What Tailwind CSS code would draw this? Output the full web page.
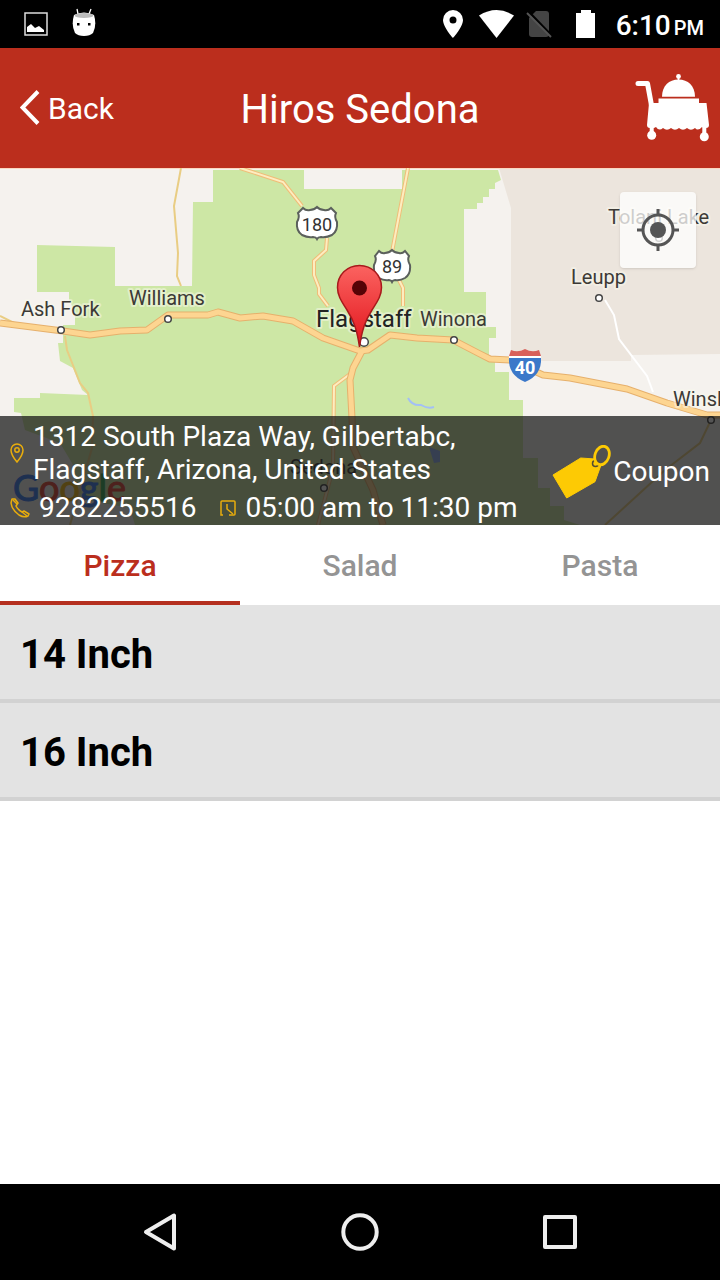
<!DOCTYPE html>
<html lang="en">
<head>
    <meta charset="UTF-8">
    <meta name="viewport" content="width=device-width, initial-scale=1.0">
    <title>Hiros Sedona</title>
    <script src="https://cdn.jsdelivr.net/npm/@tailwindcss/browser@4"></script>
</head>
<body class="bg-white font-['Roboto',sans-serif]">
    <div class="min-h-screen flex flex-col">
        <!-- Status bar -->
        <div class="h-12 bg-black text-white flex items-center justify-between pl-6 pr-4">
            <div class="flex items-center gap-6">
                <svg class="w-6 h-6" viewBox="0 0 24 24" fill="none">
                    <rect x="1" y="1" width="22" height="22" stroke="#ddd" stroke-width="1.5"/>
                    <path d="M3 20V15L7 12L11 16L15 14L20 18V20Z" fill="#fff"/>
                </svg>
                <svg class="w-6 h-7 mb-1" viewBox="0 0 24 28">
                    <path d="M6 6L5 1M17 6L19 1" stroke="#fff" stroke-width="1.3"/>
                    <path d="M2 7Q12 2 22 7Q25 17 21 25Q18 28 12 28Q6 28 3 25Q-1 17 2 7Z" fill="#fff"/>
                    <ellipse cx="12" cy="7.500" rx="9.500" ry="2.500" fill="#bbb"/>
                    <rect x="5" y="15" width="2.500" height="2.500"/>
                    <rect x="16" y="15" width="2.500" height="2.500"/>
                </svg>
            </div>
            <div class="flex items-center">
                <svg class="w-5 h-7 mr-4" viewBox="0 0 20 28">
                    <path fill="#fff" fill-rule="evenodd" d="M10 0A10 10 0 0 0 0 10C0 17 10 28 10 28S20 17 20 10A10 10 0 0 0 10 0ZM10 13.500A3.500 3.500 0 1 1 10 6.500A3.500 3.500 0 0 1 10 13.500Z"/>
                </svg>
                <svg class="w-[35px] h-7 mr-3" viewBox="0 0 35 28">
                    <path fill="#fff" d="M0 5.500Q17.500-5.500 35 5.500L17.500 28Z"/>
                </svg>
                <svg class="w-[26px] h-7 mr-6" viewBox="0 0 26 28">
                    <path d="M3 8L10 1H20Q23 1 23 4V24Q23 27 20 27H6Q3 27 3 24Z" fill="#444"/>
                    <path d="M2 1L26 26" stroke="#000" stroke-width="2.500"/>
                    <path d="M1 3L25 27" stroke="#555" stroke-width="2"/>
                </svg>
                <svg class="w-5 h-7 mr-5" viewBox="0 0 20 28">
                    <path fill="#fff" d="M5 0H15V3H19V28H0V3H5Z"/>
                </svg>
                <span class="text-[28px] font-medium leading-8 pt-1">6:10 <span class="text-xl -ml-1">PM</span></span>
            </div>
        </div>

        <!-- Header -->
        <header class="h-[120px] bg-[#bb2e1d] text-white grid grid-cols-[1fr_auto_1fr] items-center px-2.5">
            <button type="button" class="flex items-center gap-2 pl-2.5 text-[30px] justify-self-start">
                <svg class="w-5 h-9" viewBox="0 0 20 36" fill="none" stroke="#fff" stroke-width="4">
                    <path d="M18 1.500L2.500 17.500L18 33.500"/>
                </svg>
                Back
            </button>
            <h1 class="text-[40px] leading-12 pt-1">Hiros Sedona</h1>
            <button type="button" class="justify-self-end" aria-label="Cart">
                <svg class="w-[75px] h-[68px]" viewBox="0 0 75 68" fill="#fff">
                    <path d="M3 9.500H12.500L17 34" fill="none" stroke="#fff" stroke-width="5" stroke-linecap="round" stroke-linejoin="round"/>
                    <circle cx="43.500" cy="2.500" r="2.400"/>
                    <path d="M42.700 3H44.300V7H42.700Z"/>
                    <path d="M27 22.700C27 12 34 5.500 43.500 5.500S60 12 60 22.700Z"/>
                    <path d="M23.500 24.500H64V29H71.500L74 51Q74 54 71 54Q69.500 55 67 53Q63 57.500 60 54Q56 57.500 52 54Q48 57.500 44 54Q40 57.500 36 54Q32 57.500 28 54Q24 57.500 21 53Q18 55 15 54Q12 54 12 51L14 29H23.500Z"/>
                    <path d="M14.700 52H18.700V58H14.700ZM67.300 52H71.300V60H67.300Z"/>
                    <circle cx="16.700" cy="61.200" r="4.500"/>
                    <circle cx="69.300" cy="62.800" r="4.500"/>
                </svg>
            </button>
        </header>

        <!-- Map -->
        <section class="relative h-[357px] overflow-hidden bg-[#f5f2ee]">
            <svg class="w-full h-full" viewBox="0 0 720 357" preserveAspectRatio="xMidYMid slice">
                <defs>
                    <linearGradient id="pinFill" x1="0" y1="0" x2="0" y2="1">
                        <stop offset="0" stop-color="#fb6360"/>
                        <stop offset="1" stop-color="#e2141c"/>
                    </linearGradient>
                </defs>
                <rect width="720" height="357" fill="#f5f2ee"/>
                <path fill="#ece5dd" d="M499 0L511 40V193H631V187L720 186V0Z"/>
                <path fill="#cde7a5" d="M213 2V34H193L192 118H115V79L37 77V124H69V131L75 145V157H63V175H58L60 193L73 200L82 222L88 227L40 225V230H14V244L21 245L25 262L60 275L75 300V330L130 340L135 357H580L564 352V338H550V320H538V290H523V232H509V204H495V190H489V170H496V159H486V124H464V41H477V35H483V29H489V21H495V15L501 12L498 2H402V21H304V2Z"/>
                <path d="M0 0.500H720" stroke="#fbd7c1"/>
                <path d="M408 230Q412 238 421 237Q428 241 434 239" fill="none" stroke="#a3bff5" stroke-width="2"/>
                <path d="M429 279L440 283V294L434 295Z" fill="#8fb0f5"/>

                <!-- minor roads -->
                <g fill="none" stroke="#e9cd83" stroke-width="2">
                    <path d="M181 0L174 38L178 85L177 108L181 118"/>
                    <path d="M65 168L67 182L80 215L88 225L93 248L92 280L70 357"/>
                    <path d="M711 252L700 275L665 302L640 325L605 357"/>
                    <path d="M0 148L16 156"/>
                    <path d="M605 132L614 147L619 171L647 208L653 224" stroke="#fff"/>
                </g>
                <g fill="none" stroke="#f0bd78" stroke-width="4">
                    <path d="M240 0L283 14L302 38"/>
                    <path d="M327 70L326 82L314 93V107L319 120V126L328 138"/>
                    <path d="M408 0L392 84M398 110L403 120V138"/>
                    <path d="M350 206L334 218L333 300L318 357"/>
                </g>
                <g fill="none" stroke="#fdedc0" stroke-width="2">
                    <path d="M240 0L283 14L302 38"/>
                    <path d="M327 70L326 82L314 93V107L319 120V126L328 138"/>
                    <path d="M408 0L392 84M398 110L403 120V138"/>
                    <path d="M350 206L334 218L333 300L318 357"/>
                </g>

                <!-- interstates -->
                <g fill="none" stroke="#e6b06c" stroke-width="7" stroke-linejoin="round">
                    <path d="M0 155L63 163L90 167L120 163L147 162L168 147L208 147L218 144L240 150L263 148L293 153L323 170L360 183L368 182L390 167L417 170L453 172L480 186L490 191L510 192L543 207L570 210L627 221L667 235L707 247H720"/>
                    <path d="M362 183L353 200L350 212L352 250L353 279L373 322L383 357"/>
                </g>
                <g fill="none" stroke="#fdd591" stroke-width="5" stroke-linejoin="round">
                    <path d="M0 155L63 163L90 167L120 163L147 162L168 147L208 147L218 144L240 150L263 148L293 153L323 170L360 183L368 182L390 167L417 170L453 172L480 186L490 191L510 192L543 207L570 210L627 221L667 235L707 247H720"/>
                    <path d="M362 183L353 200L350 212L352 250L353 279L373 322L383 357"/>
                </g>

                <!-- towns -->
                <g fill="#fff" stroke="#444" stroke-width="1.500">
                    <circle cx="61" cy="162" r="3.300"/>
                    <circle cx="168" cy="151" r="3.300"/>
                    <circle cx="364" cy="174" r="4.300"/>
                    <circle cx="454" cy="172" r="3.300"/>
                    <circle cx="599" cy="130" r="3.300"/>
                    <circle cx="659" cy="70" r="3.300"/>
                    <circle cx="711" cy="252" r="3.300"/>
                    <circle cx="324" cy="320" r="3.300"/>
                </g>
                <g class="text-xl" fill="#3c3a36" stroke="#f8f8ec" stroke-opacity="0.500" stroke-width="4" stroke-linejoin="round" paint-order="stroke">
                    <text x="21" y="148">Ash Fork</text>
                    <text x="129" y="137">Williams</text>
                    <text x="420" y="158">Winona</text>
                    <text x="571" y="116">Leupp</text>
                    <text x="608" y="56">Tolani Lake</text>
                    <text x="673" y="238">Winslow</text>
                    <text x="290" y="306" stroke="none">Sedona</text>
                    <text x="316" y="159" class="text-2xl" fill="#222">Flagstaff</text>
                </g>

                <!-- route shields -->
                <g fill="#fff" stroke="#5b605c" stroke-width="2">
                    <path transform="translate(296 39)" d="M2 6L7 1Q10 4 14 3Q18 3 21 0Q24 3 28 3Q32 4 35 1L40 6Q38 10 41 15Q42 24 36 28Q30 31 25 30Q22 30 21 32Q20 30 17 30Q12 31 6 28Q0 24 1 15Q4 10 2 6Z"/>
                    <path transform="translate(373 82)" d="M2 6L6 1Q9 4 12 3Q16 3 19 0Q22 3 26 3Q29 4 32 1L36 6Q34 10 37 15Q38 24 32 28Q27 31 22 30Q20 30 19 32Q18 30 16 30Q11 31 6 28Q0 24 1 15Q4 10 2 6Z"/>
                </g>
                <g class="text-lg" fill="#333" text-anchor="middle">
                    <text x="317" y="63">180</text>
                    <text x="392" y="105">89</text>
                </g>
                <path fill="#d9605a" d="M511 182Q518 185 525 181Q532 185 539 182L541 188H509Z"/>
                <path fill="#3b78c9" d="M509 190H541Q542 207 525 214Q508 207 509 190Z"/>
                <path stroke="#fff" stroke-width="2" d="M509 189H541"/>
                <text x="525" y="206" class="text-lg font-bold" fill="#fff" text-anchor="middle">40</text>

                <text x="13" y="333" class="text-[36px] font-['Lato',sans-serif]" stroke-width="1"><tspan fill="#3a7cf0" stroke="#3a7cf0">G</tspan><tspan fill="#e64436" stroke="#e64436">o</tspan><tspan fill="#f5b912" stroke="#f5b912">o</tspan><tspan fill="#3a7cf0" stroke="#3a7cf0">g</tspan><tspan fill="#34a853" stroke="#34a853">l</tspan><tspan fill="#e64436" stroke="#e64436">e</tspan></text>

                <path fill="url(#pinFill)" stroke="#a81a1c" stroke-width="1.500" d="M359.500 97.500C347 97.500 337.500 107 337.500 119.500C337.500 128 342 134 347 142C354 153 357 162 359.500 179C362 162 365 153 372 142C377 134 381.500 128 381.500 119.500C381.500 107 372 97.500 359.500 97.500Z"/>
                <circle cx="359.500" cy="120" r="7.500" fill="#560306"/>
            </svg>

            <button type="button" aria-label="My location" class="absolute top-6 right-6 size-[76px] flex items-center justify-center rounded-sm bg-white/75 shadow">
                <svg class="size-[42px]" viewBox="0 0 42 42" fill="none" stroke="#555" stroke-width="3">
                    <circle cx="21" cy="21" r="15"/>
                    <circle cx="21" cy="21" r="8" fill="#555" stroke="none"/>
                    <path d="M21 0V7M21 35V42M0 21H7M35 21H42"/>
                </svg>
            </button>

            <!-- Restaurant info -->
            <div class="absolute inset-x-0 bottom-0 bg-[#141414]/73 text-white text-[28px] leading-[33px] flex items-center justify-between px-2.5">
                <div class="pt-1">
                    <address class="not-italic flex items-center gap-[9px]">
                        <svg class="w-3.5 h-5" viewBox="0 0 14 20" fill="none" stroke="#e9ad0c" stroke-width="1.500">
                            <path d="M7 1A6 6 0 0 0 1 7C1 12 7 19 7 19S13 12 13 7A6 6 0 0 0 7 1Z"/>
                            <circle cx="7" cy="7" r="2.200"/>
                        </svg>
                        <span>1312 South Plaza Way, Gilbertabc,<br>Flagstaff, Arizona, United States</span>
                    </address>
                    <div class="flex items-center gap-6 pt-[5px] pb-px">
                        <a href="tel:9282255516" class="flex items-center gap-[9px]">
                            <svg class="size-5" viewBox="0 0 20 20" fill="none" stroke="#e9ad0c" stroke-width="1.500" stroke-linejoin="round">
                                <path d="M2 1L5 1L8 5L6 8Q8 12 12 14L14 13L19 16L18 18Q14 20 9 17Q2 12 1 5Z"/>
                                <path d="M3 2L7 6M12 14L17 18"/>
                            </svg>
                            9282255516
                        </a>
                        <div class="flex items-center gap-[9px]">
                            <svg class="size-4" viewBox="0 0 16 16" fill="none" stroke="#e9ad0c" stroke-width="1.500">
                                <path d="M3 15H1V2Q1 1 2 1H14Q15 1 15 2V14Q15 15 14 15H9"/>
                                <path d="M7 4V9L13 14"/>
                            </svg>
                            05:00 am to 11:30 pm
                        </div>
                    </div>
                </div>
                <button type="button" class="flex items-center gap-0.5 pt-0.5">
                    <svg class="w-[59px] h-[54px]" viewBox="0 0 59 54">
                        <path fill="#fdca04" stroke="#fdca04" stroke-linejoin="round" d="M1 30L28.700 13L43 14L49 20L43 36.700L14.700 53Z"/>
                        <circle cx="43.500" cy="18.500" r="3" fill="none" stroke="#514d35" stroke-width="1.500"/>
                        <ellipse cx="50" cy="10.500" rx="7" ry="9.500" transform="rotate(20 50 10.500)" fill="none" stroke="#fdca04" stroke-width="2.800"/>
                    </svg>
                    Coupon
                </button>
            </div>
        </section>

        <!-- Menu -->
        <main class="flex-1">
            <div role="tablist" class="grid grid-cols-3 h-20 text-[30px] font-medium text-[#949494]">
                <button type="button" role="tab" aria-selected="true" class="pt-1 border-b-4 border-[#b5301f] text-[#bb2e1d]">Pizza</button>
                <button type="button" role="tab" class="pt-1 border-b-4 border-transparent">Salad</button>
                <button type="button" role="tab" class="pt-1 border-b-4 border-transparent">Pasta</button>
            </div>
            <ul class="text-[40px] font-bold text-black">
                <li><button type="button" class="w-full h-[98px] px-5 pt-1.5 text-left bg-[#e3e3e3] border-b-4 border-[#d2d2d2]">14 Inch</button></li>
                <li><button type="button" class="w-full h-[98px] px-5 pt-1.5 text-left bg-[#e3e3e3] border-b-4 border-[#d2d2d2]">16 Inch</button></li>
            </ul>
        </main>

        <!-- Navigation bar -->
        <nav class="h-24 bg-black px-[60px] grid grid-cols-3 items-center justify-items-center">
            <button type="button" aria-label="Back">
                <svg class="size-10" viewBox="0 0 40 40" fill="none" stroke="#eee" stroke-width="4" stroke-linejoin="round">
                    <path d="M34 3.500V36.500L6 20Z"/>
                </svg>
            </button>
            <button type="button" aria-label="Home">
                <svg class="size-10" viewBox="0 0 40 40" fill="none" stroke="#eee" stroke-width="4">
                    <circle cx="20" cy="20" r="16.700"/>
                </svg>
            </button>
            <button type="button" aria-label="Recent apps">
                <svg class="size-10" viewBox="0 0 40 40" fill="none" stroke="#eee" stroke-width="4" stroke-linejoin="round">
                    <rect x="5" y="5" width="30" height="30"/>
                </svg>
            </button>
        </nav>
    </div>
</body>
</html>
